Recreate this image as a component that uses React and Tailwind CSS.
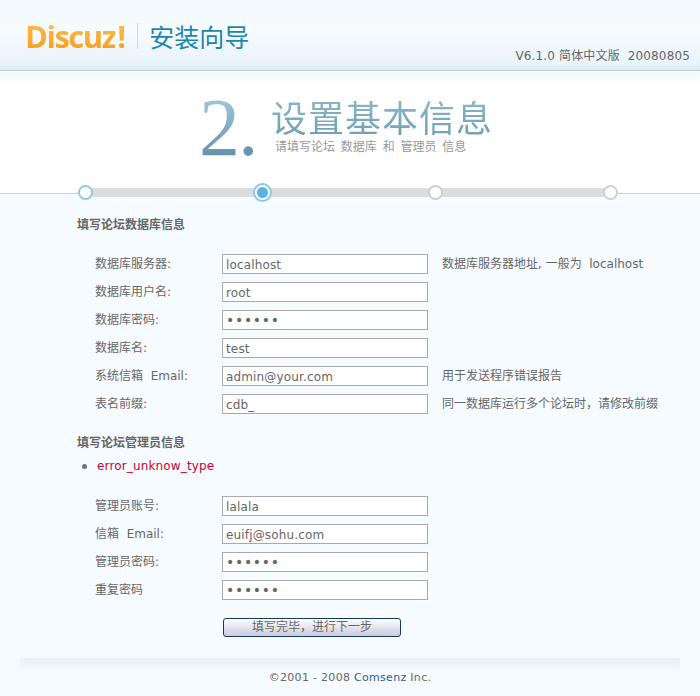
const latin = "font-['DejaVu_Sans','Noto_Sans_CJK_SC',sans-serif]";

function Row({ label, value, hint, type = "text" }) {
  const isPassword = type === "password";
  return (
    <div className="flex h-[20px] mb-[8px] items-center">
      <div className="w-[145px] pl-[18px] text-[12px] leading-[20px] whitespace-pre">{label}</div>
      <input
        readOnly
        type={type}
        value={value}
        className={`w-[206px] h-[20px] border border-[#a9a9a9] bg-white px-[3px] pt-[1px] text-[#666] outline-none ${isPassword ? "text-[14px] tracking-[0.7px]" : "text-[12px] tracking-[0.15px]"}`}
      />
      {hint && <div className="ml-[14px] text-[12px] leading-[20px] whitespace-pre">{hint}</div>}
    </div>
  );
}

function Dot({ active, done }) {
  if (active) {
    return (
      <div className="w-[19px] h-[19px] rounded-full border-[2px] border-[#8cc8e8] bg-white flex items-center justify-center">
        <div className="w-[11px] h-[11px] rounded-full bg-[#58b1ea]" />
      </div>
    );
  }
  return (
    <div className={`w-[15px] h-[15px] rounded-full border-[2px] bg-white ${done ? "border-[#8cc8e8]" : "border-[#cfcfcf]"}`} />
  );
}

export default function App() {
  return (
    <div className={`${latin} w-[700px] h-[696px] overflow-hidden bg-[#f6fbff] text-[#666] text-[12px]`}>
      {/* header */}
      <header className="h-[65px] bg-gradient-to-b from-[#f3f9fd] via-[#f7fbfe] to-[#e8f3fb] relative">
        <div className="flex items-center pl-[25px] pt-[18px]">
          <span className="font-['Open_Sans',sans-serif] font-bold text-[31px] leading-[36px] tracking-[-1.5px] bg-gradient-to-b from-[#ffc04d] to-[#f89a0c] bg-clip-text text-transparent">
            Discuz
          </span>
          <span className="ml-[2px] font-['Open_Sans',sans-serif] font-bold text-[31px] leading-[36px] bg-gradient-to-b from-[#ffc04d] to-[#f89a0c] bg-clip-text text-transparent">
            !
          </span>
          <span className="w-px h-[26px] bg-[#ccd6dc] ml-[11px]" />
          <span className="ml-[11px] font-['Noto_Sans_CJK_SC',sans-serif] text-[25px] leading-[30px] text-[#1c86ad]">
            安装向导
          </span>
        </div>
        <div className="absolute right-[10px] top-[48px] text-[12px] leading-[16px] tracking-[0.15px] whitespace-pre text-[#666]">
          V6.1.0 简体中文版  20080805
        </div>
      </header>
      <div className="h-[5px] bg-[#dfedf6]" />
      <div className="h-[2px] bg-[#b9cdd6] border-b border-white" />
      <div className="h-[12px] bg-gradient-to-b from-[#f2f8fc] to-white" />

      {/* title */}
      <section className="h-[109px] bg-white border-b border-[#b5d6e4] relative box-content">
        <div className="flex pl-[199px]">
          <div className="w-[60px] font-['Liberation_Serif',serif] text-[82px] leading-[70px] mt-[9px] tracking-[-2px] bg-gradient-to-b from-[#a7cbdc] to-[#5b8ea5] bg-clip-text text-transparent">
            2.
          </div>
          <div className="ml-[12px]">
            <div className="font-['Noto_Sans_CJK_SC',sans-serif] text-[36px] leading-[40px] tracking-[1px] mt-[12px] bg-gradient-to-b from-[#8db8c9] to-[#6fa0b4] bg-clip-text text-transparent">
              设置基本信息
            </div>
            <div className="text-[12px] leading-[16px] ml-[4px] mt-[3px] whitespace-pre text-[#999] [word-spacing:2px]">
              请填写论坛 数据库 和 管理员 信息
            </div>
          </div>
        </div>
        {/* steps */}
        <div className="absolute left-[85px] top-[104px] w-[525px] h-[9px] bg-[#dcdcdc]" />
        <div className="absolute left-[78px] top-[101px]"><Dot done /></div>
        <div className="absolute left-[253px] top-[99px]"><Dot active /></div>
        <div className="absolute left-[428px] top-[101px]"><Dot /></div>
        <div className="absolute left-[603px] top-[101px]"><Dot /></div>
      </section>

      {/* form */}
      <main className="pl-[77px] pr-[20px]">
        <h2 className="font-bold text-[12px] leading-[16px] pt-[23px]">填写论坛数据库信息</h2>
        <div className="mt-[13px] pt-[8px]">
          <Row label="数据库服务器:" value="localhost" hint="数据库服务器地址, 一般为  localhost" />
          <Row label="数据库用户名:" value="root" />
          <Row label="数据库密码:" value="123456" type="password" />
          <Row label="数据库名:" value="test" />
          <Row label="系统信箱  Email:" value="admin@your.com" hint="用于发送程序错误报告" />
          <Row label="表名前缀:" value="cdb_" hint="同一数据库运行多个论坛时，请修改前缀" />
        </div>
        <h2 className="font-bold text-[12px] leading-[16px] mt-[21px]">填写论坛管理员信息</h2>
        <div className="flex items-center h-[16px] mt-[7px] pl-[5px]">
          <span className="w-[5px] h-[5px] rounded-full bg-[#6b7280]" />
          <span className="ml-[10px] text-[12px] leading-[16px] tracking-[0.15px] text-[#cc0033]">error_unknow_type</span>
        </div>
        <div className="mt-[22px]">
          <Row label="管理员账号:" value="lalala" />
          <Row label="信箱  Email:" value="euifj@sohu.com" />
          <Row label="管理员密码:" value="123456" type="password" />
          <Row label="重复密码" value="123456" type="password" />
        </div>
        <div className="pl-[146px] mt-[18px]">
          <button className="w-[178px] h-[19px] rounded-[3px] border border-[#16395c] bg-gradient-to-b from-white to-[#c9cadc] text-[12px] leading-[15px] text-[#666]">
            填写完毕，进行下一步
          </button>
        </div>
      </main>

      {/* footer */}
      <footer className="mx-[20px] mt-[21px]">
        <div className="h-[11px] bg-gradient-to-b from-[#e6f1fa] to-[#f1f7fc]" />
        <div className="text-center text-[11px] leading-[16px] tracking-[0.3px] mt-[1px]">
          ©2001 - 2008 <span className="text-[#2b5c8f]">Comsenz</span> Inc.
        </div>
      </footer>
    </div>
  );
}
